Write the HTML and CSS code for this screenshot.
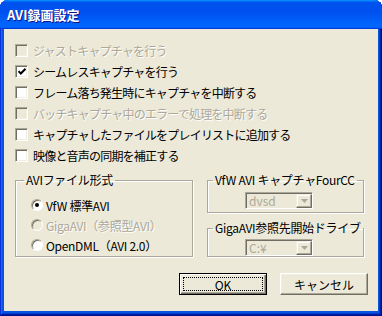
FILE: index.html
```html
<!DOCTYPE html>
<html lang="ja">
<head>
    <meta charset="UTF-8">
    <title>AVI録画設定</title>
    <link rel="stylesheet" href="styles.css">
</head>
<body>

<div class="window">
  <div class="titlebar">AVI録画設定</div>

  <div class="client">
    <ul class="checks">
      <li class="check disabled"><span class="box"></span>ジャストキャプチャを行う</li>
      <li class="check">
        <span class="box">
          <svg width="8" height="7" viewBox="0 0 8 7"><path d="M0.5 3.2 L2.8 5.5 L7.5 0.8" fill="none" stroke="#000" stroke-width="2"/></svg>
        </span>シームレスキャプチャを行う
      </li>
      <li class="check"><span class="box"></span>フレーム落ち発生時にキャプチャを中断する</li>
      <li class="check disabled"><span class="box"></span>バッチキャプチャ中のエラーで処理を中断する</li>
      <li class="check"><span class="box"></span>キャプチャしたファイルをプレイリストに追加する</li>
      <li class="check"><span class="box"></span>映像と音声の同期を補正する</li>
    </ul>

    <div class="groups">
      <fieldset class="group group-format">
        <legend>AVIファイル形式</legend>
        <div class="radio-row"><span class="radio on"></span>VfW 標準AVI</div>
        <div class="radio-row disabled"><span class="radio"></span>GigaAVI（参照型AVI）</div>
        <div class="radio-row"><span class="radio"></span>OpenDML（AVI 2.0）</div>
      </fieldset>

      <div class="side">
        <fieldset class="group group-fourcc">
          <legend>VfW AVI キャプチャFourCC</legend>
          <div class="combo">
            <span class="combo-value">dvsd</span>
            <span class="combo-arrow"><svg width="7" height="4" viewBox="0 0 7 4"><path d="M0 0 H7 L3.5 4 Z" fill="#aca899"/></svg></span>
          </div>
        </fieldset>
        <fieldset class="group group-drive">
          <legend>GigaAVI参照先開始ドライブ</legend>
          <div class="combo">
            <span class="combo-value">C:¥</span>
            <span class="combo-arrow"><svg width="7" height="4" viewBox="0 0 7 4"><path d="M0 0 H7 L3.5 4 Z" fill="#aca899"/></svg></span>
          </div>
        </fieldset>
      </div>
    </div>

    <div class="buttons">
      <button class="btn default">OK</button>
      <button class="btn">キャンセル</button>
    </div>
  </div>
</div>

</body>
</html>
```

FILE: styles.css
```css
/*RESETS*/

body {
    margin: 0;
    background: #fff;
}

ul {
    margin: 0;
    padding: 0;
    list-style: none;
}

/*WINDOW*/

.window {
    width: 382px;
    height: 316px;
    display: flex;
    flex-direction: column;
    border-radius: 8px 8px 0 0;
    overflow: hidden;
    background: #0855dd;
    box-shadow: inset -1px -1px #00138c, inset 1px 1px #0831d9,
                inset -2px -2px #001ea0, inset 2px 2px #166aee,
                inset -3px -3px #003bda, inset 3px 3px #0855dd;
}

.titlebar {
    height: 29px;
    flex: none;
    box-sizing: border-box;
    padding: 1px 0 0 7px;
    line-height: 27px;
    font-family: "Noto Sans CJK JP", sans-serif;
    font-size: 13px;
    font-weight: bold;
    color: #fff;
    text-shadow: 1px 1px #0f1089;
    background: linear-gradient(180deg, #0997ff, #0053ee 8%, #0050ee 40%, #06f 88%, #06f 93%, #005bff 95%, #003dd7 96%, #003dd7);
}

.client {
    flex: 1;
    margin: 0 4px 5px 4px;
    padding: 11px 10px 0 11px;
    background: #ece9d8;
    font-family: "Noto Sans CJK JP", sans-serif;
    font-size: 12px;
    letter-spacing: -0.3px;
    color: #000;
}

.disabled {
    color: #aca899;
    text-shadow: 1px 1px #fff;
}

/*CHECKBOXES*/

.check {
    height: 21px;
    display: flex;
    align-items: center;
    gap: 5px;
    white-space: nowrap;
    letter-spacing: -0.8px;
}

.box {
    width: 13px;
    height: 13px;
    flex: none;
    box-sizing: border-box;
    display: flex;
    align-items: center;
    justify-content: center;
    border: 1px solid;
    border-color: #aca899 #fff #fff #aca899;
    box-shadow: inset 1px 1px #716f64, inset -1px -1px #f1efe2;
    background: #fff;
}

.check.disabled .box {
    background: #ece9d8;
}

/*GROUPS*/

.groups {
    display: flex;
    gap: 14px;
    margin: 6px 4px 0 0;
}

.group {
    margin: 0;
    min-width: 0;
    border: 1px solid #aca899;
    box-shadow: inset 1px 1px #fff, 1px 1px #fff;
    padding: 0;
}

.group legend {
    padding: 0 2px;
    line-height: 16px;
    white-space: nowrap;
}

.group-format {
    width: 178px;
    box-sizing: border-box;
    padding-top: 7px;
}

.group-format legend {
    margin-left: 8px;
}

.side {
    flex: 1;
    min-width: 0;
    display: flex;
    flex-direction: column;
    gap: 7px;
}

.side .group legend {
    margin-left: 5px;
}

.group-fourcc {
    padding: 4px 0 3px;
}

.group-drive {
    flex: 1;
    padding-top: 3px;
}

/*RADIOS*/

.radio-row {
    height: 20px;
    margin-left: 15px;
    display: flex;
    align-items: center;
    gap: 3px;
    white-space: nowrap;
}

.radio {
    position: relative;
    width: 12px;
    height: 12px;
    flex: none;
    box-sizing: border-box;
    border-radius: 50%;
    border: 1px solid;
    border-color: #aca899 #fff #fff #aca899;
    box-shadow: inset 1px 1px #716f64;
    background: #fff;
}

.radio-row.disabled .radio {
    background: #ece9d8;
}

.radio.on::after {
    content: "";
    position: absolute;
    left: 3px;
    top: 3px;
    width: 4px;
    height: 4px;
    border-radius: 50%;
    background: #000;
}

/*COMBOS*/

.combo {
    width: 68px;
    height: 17px;
    margin-left: 37px;
    box-sizing: border-box;
    display: flex;
    border: 1px solid;
    border-color: #aca899 #fff #fff #aca899;
    box-shadow: inset 1px 1px #716f64;
    padding: 1px 0 0 1px;
}

.combo-value {
    flex: 1;
    padding-left: 2px;
    line-height: 14px;
    letter-spacing: 0;
    color: #aca899;
}

.combo-arrow {
    width: 16px;
    box-sizing: border-box;
    display: flex;
    align-items: center;
    justify-content: center;
    border: 1px solid;
    border-color: #f1efe2 #716f64 #716f64 #f1efe2;
    box-shadow: inset -1px -1px #aca899, inset 1px 1px #fff;
    background: #ece9d8;
}

/*BUTTONS*/

.buttons {
    display: flex;
    justify-content: flex-end;
    gap: 13px;
    margin-top: 16px;
}

.btn {
    width: 88px;
    height: 22px;
    padding: 0;
    font-family: "Noto Sans CJK JP", sans-serif;
    font-size: 12px;
    color: #000;
    background: #ece9d8;
    border: 1px solid;
    border-color: #fff #716f64 #716f64 #fff;
    box-shadow: inset -1px -1px #aca899, inset 1px 1px #f1efe2;
}

.btn.default {
    border-color: #000;
    box-shadow: inset 1px 1px #fff, inset -1px -1px #716f64, inset -2px -2px #aca899;
    outline: 1px dotted #000;
    outline-offset: -5px;
}
```
